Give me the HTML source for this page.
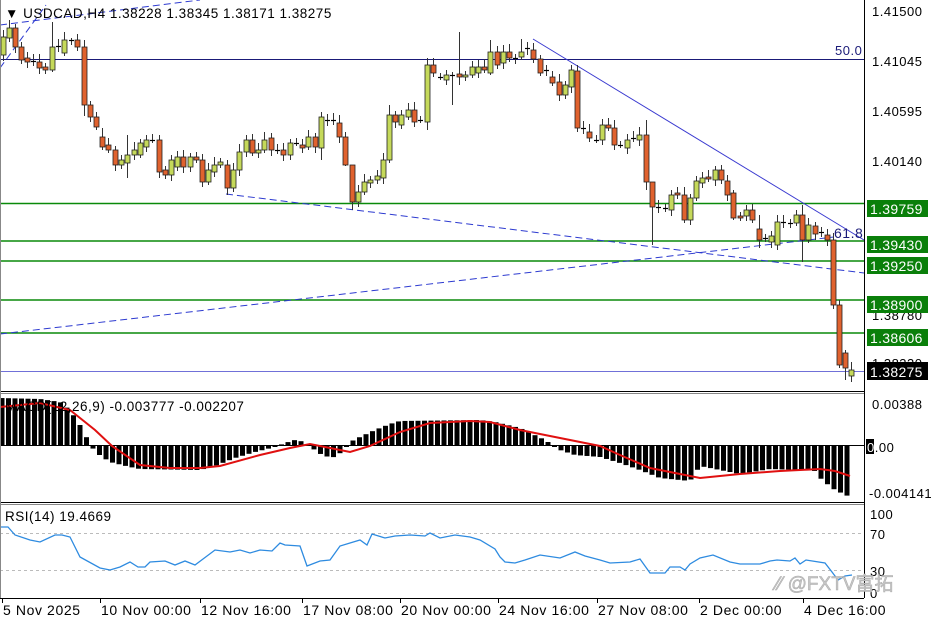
<!DOCTYPE html>
<html><head><meta charset="utf-8">
<style>
html,body{margin:0;padding:0;background:#fff;}
body{width:936px;height:624px;overflow:hidden;font-family:"Liberation Sans","Noto Sans CJK SC",sans-serif;}
svg text{font-family:"Liberation Sans","Noto Sans CJK SC",sans-serif;font-size:13px;letter-spacing:0.5px;fill:#000;}
</style></head>
<body>
<svg id="c" width="936" height="624" xmlns="http://www.w3.org/2000/svg">
<rect width="936" height="624" fill="#fff"/>
<g id="lines">
<line x1="0" y1="59.5" x2="864" y2="59.5" stroke="#1a1a78" stroke-width="1"/>
<line x1="0" y1="371.5" x2="864" y2="371.5" stroke="#7070d8" stroke-width="1"/>
<g stroke="#0a8a0a" stroke-width="1.6">
<line x1="0" y1="203.5" x2="864" y2="203.5"/>
<line x1="0" y1="241" x2="864" y2="241"/>
<line x1="0" y1="261" x2="864" y2="261"/>
<line x1="0" y1="300" x2="864" y2="300"/>
<line x1="0" y1="333" x2="864" y2="333"/>
</g>
<line x1="533" y1="39" x2="864" y2="240" stroke="#3a3ad0" stroke-width="1"/>
<line x1="226" y1="194" x2="864" y2="273" stroke="#2d3ad0" stroke-width="1" stroke-dasharray="7,4"/>
<line x1="0" y1="334" x2="834" y2="237" stroke="#2d3ad0" stroke-width="1" stroke-dasharray="7,4"/>
<line x1="0" y1="68" x2="46" y2="5" stroke="#2d3ad0" stroke-width="1" stroke-dasharray="7,4"/>
<line x1="0" y1="25" x2="200" y2="0" stroke="#2d3ad0" stroke-width="1" stroke-dasharray="7,4"/>
<text x="835" y="55" style="fill:#1a1a78">50.0</text>
<text x="834" y="238" style="fill:#1a1a78;font-size:14px">61.8</text>
</g>
<g id="candles"></g>
<g id="macd"></g>
<g id="rsi"></g>
<g stroke="#000" fill="none">
<line x1="864.5" y1="0" x2="864.5" y2="598"/>
<line x1="0" y1="391.5" x2="864" y2="391.5"/>
<line x1="0" y1="393.5" x2="864" y2="393.5" stroke="#888"/>
<line x1="0" y1="502.5" x2="864" y2="502.5"/>
<line x1="0" y1="504.5" x2="864" y2="504.5" stroke="#888"/>
<line x1="0" y1="598.5" x2="864" y2="598.5"/>
<line x1="0.5" y1="0" x2="0.5" y2="598" stroke="#888"/>
</g>
<text x="5" y="18" style="font-size:13.5px">&#9660; USDCAD,H4  1.38228 1.38345 1.38171 1.38275</text>
<text x="5" y="411" style="font-size:13.5px">MACD(12,26,9) -0.003777 -0.002207</text>
<text x="5" y="521" style="font-size:13.5px">RSI(14) 19.4669</text>
<g>
<text x="872" y="16">1.41500</text>
<text x="872" y="66">1.41045</text>
<text x="872" y="116">1.40595</text>
<text x="872" y="166">1.40140</text>
<text x="872" y="320">1.38780</text>
<text x="872" y="368">1.38330</text>
<g fill="#0a7f0a">
<rect x="867" y="200" width="61" height="17"/>
<rect x="867" y="236" width="61" height="17"/>
<rect x="867" y="257" width="61" height="17"/>
<rect x="867" y="296" width="61" height="17"/>
<rect x="867" y="329" width="61" height="17"/>
</g>
<rect x="867" y="362" width="61" height="18" fill="#000"/>
<text x="870" y="214" style="fill:#fff;font-size:14px;letter-spacing:0.3px">1.39759</text>
<text x="870" y="250" style="fill:#fff;font-size:14px;letter-spacing:0.3px">1.39430</text>
<text x="870" y="271" style="fill:#fff;font-size:14px;letter-spacing:0.3px">1.39250</text>
<text x="870" y="310" style="fill:#fff;font-size:14px;letter-spacing:0.3px">1.38900</text>
<text x="870" y="343" style="fill:#fff;font-size:14px;letter-spacing:0.3px">1.38606</text>
<text x="870" y="377" style="fill:#fff;font-size:14px;letter-spacing:0.3px">1.38275</text>
<text x="872" y="409">0.00388</text>
<rect x="866" y="439" width="8" height="15" fill="#000"/>
<text x="867" y="452"><tspan style="fill:#fff">0</tspan>.00</text>
<text x="869" y="498">-0.004141</text>
<text x="870" y="519">100</text>
<text x="870" y="539">70</text>
<text x="870" y="576">30</text>
<text x="870" y="598">0</text>
</g>
<text x="776" y="590" style="fill:#c8c8c8;font-size:19px;stroke:#aaa;stroke-width:0.5;letter-spacing:0">⁄⁄ @FXTV富拓</text>
<g id="time"></g>
</svg>
<script>
var NS="http://www.w3.org/2000/svg";
function el(p,t,a){var e=document.createElementNS(NS,t);for(var k in a)e.setAttribute(k,a[k]);p.appendChild(e);return e;}
var C=document.getElementById('candles');
var d=[[3,55,37],[9,38,28],[15,28,47],[21,47,60],[27,58,62],[33,61,62],[39,62,68],[45,67,70],[52,70,47],[58,47,46],[64,53,40],[71,40,40],[77,40,47],[84,47,105],[90,105,117],[96,117,127],[102,137,147],[108,145,150],[115,150,165],[121,165,160],[127,163,155],[134,155,150],[140,155,143],[146,147,140],[152,140,140],[159,140,172],[165,170,175],[171,175,160],[177,167,157],[183,157,167],[190,167,157],[196,157,160],[202,160,182],[208,182,170],[214,172,165],[220,165,162],[227,165,188],[233,188,170],[239,170,152],[246,152,140],[252,140,153],[258,153,150],[264,150,140],[271,138,150],[277,150,150],[283,150,155],[290,155,143],[296,143,143],[302,145,148],[308,147,137],[315,137,147],[321,148,117],[327,120,120],[333,120,121],[339,123,137],[345,137,165],[352,165,202],[358,202,192],[364,192,182],[370,183,180],[377,180,176],[383,178,160],[389,160,115],[395,115,122],[401,125,115],[408,117,110],[414,110,122],[420,120,120],[427,122,65],[433,65,73],[440,77,77],[446,80,75],[452,75,75],[459,74,77],[465,77,75],[472,75,67],[478,73,67],[484,67,70],[490,73,52],[497,52,65],[503,63,52],[509,52,58],[515,58,58],[521,57,52],[527,48,49],[533,50,59],[540,59,73],[546,70,71],[552,77,83],[559,82,95],[565,95,85],[571,87,70],[577,71,128],[583,128,128],[589,132,138],[596,140,140],[602,140,125],[608,125,128],[614,128,145],[620,145,145],[627,148,140],[633,138,138],[639,140,135],[646,135,182],[652,182,207],[658,207,208],[665,208,208],[671,210,195],[677,193,195],[684,195,220],[690,220,198],[696,198,181],[702,183,178],[708,177,179],[715,180,170],[721,170,180],[727,181,195],[733,193,218],[740,216,218],[746,216,210],[752,210,220],[759,229,240],[765,238,238],[771,242,236],[777,245,222],[783,222,222],[790,223,223],[796,223,215],[802,215,240],[808,240,225],[815,226,234],[821,232,233],[827,235,240],[833,240,305],[839,305,365],[845,353,368],[851,376,370]];
var wk={13:[40,118],52:[22,72],71:[38,45],84:[40,116],102:[128,150],127:[135,178],159:[135,178],227:[160,195],321:[112,160],345:[132,166],352:[165,210],389:[105,163],427:[58,130],452:[72,105],459:[32,85],490:[40,75],521:[39,60],646:[120,190],652:[182,245],802:[205,262],777:[215,250],759:[215,248],733:[190,220],839:[300,368],845:[350,380],851:[362,382]};
d.forEach(function(c){var x=c[0],o=c[1],cl=c[2];var t=Math.min(o,cl),b=Math.max(o,cl);var w=wk[x]||[t-4-(x%5),b+3+(x%4)];
el(C,'line',{x1:x+0.5,y1:w[0],x2:x+0.5,y2:w[1],stroke:'#333','stroke-width':1});
if(b-t<1.5){el(C,'line',{x1:x-2,y1:t+0.5,x2:x+3,y2:t+0.5,stroke:'#000','stroke-width':1.2});}
else el(C,'rect',{x:x-2,y:t,width:5,height:b-t,fill:(cl<o?'#c5d95a':'#e0622e'),stroke:'#222','stroke-width':0.8});
});
var M=document.getElementById('macd');
function interp(pts,x){for(var i=0;i<pts.length-1;i++){if(x>=pts[i][0]&&x<=pts[i+1][0]){var a=pts[i],b=pts[i+1];return a[1]+(b[1]-a[1])*(x-a[0])/(b[0]-a[0]);}}return pts[pts.length-1][1];}
var hist=[[0,398],[40,399],[60,402],[70,410],[80,425],[88,440],[95,452],[110,462],[130,467],[140,469],[200,470],[215,466],[235,458],[255,452],[275,447],[285,443],[295,440],[305,442],[312,448],[322,455],[332,458],[342,452],[350,442],[360,437],[375,430],[390,424],[400,421],[480,420],[495,422],[520,428],[545,440],[560,450],[575,455],[600,457],[620,463],[640,470],[660,478],[690,481],[700,466],[720,470],[740,474],[770,469],[800,470],[815,471],[822,480],[835,490],[850,497]];
for(var x=2;x<=852;x+=6.5){var v=interp(hist,x);var t=Math.min(v,446),h=Math.abs(v-446);el(M,'rect',{x:x-2.5,y:t,width:5,height:Math.max(h,1),fill:'#000'});}
el(M,'line',{x1:0,y1:445.5,x2:864,y2:445.5,stroke:'#000','stroke-width':1});
var sig=[[0,407],[40,403],[70,410],[95,430],[112,446],[140,465],[170,468],[200,468],[220,466],[260,455],[290,448],[310,444],[330,448],[350,452],[370,446],[400,432],[430,423],[470,421],[490,422],[520,430],[560,438],[600,446],[620,455],[650,468],[700,478],[740,474],[780,471],[820,469],[835,471],[850,476]];
el(M,'polyline',{points:sig.map(function(p){return p.join(',')}).join(' '),fill:'none',stroke:'#e01010','stroke-width':2});
var R=document.getElementById('rsi');
el(R,'line',{x1:0,y1:533.5,x2:864,y2:533.5,stroke:'#bbb','stroke-dasharray':'3,3'});
el(R,'line',{x1:0,y1:570.5,x2:864,y2:570.5,stroke:'#bbb','stroke-dasharray':'3,3'});
var rs=[[0,527],[8,527],[15,535],[30,540],[40,542],[55,535],[62,535],[70,537],[80,557],[100,568],[110,570],[120,567],[130,562],[138,567],[145,567],[150,562],[165,561],[175,565],[185,561],[195,565],[215,550],[230,552],[240,550],[250,553],[260,550],[272,551],[280,543],[285,545],[300,546],[307,566],[320,561],[330,560],[340,546],[350,543],[360,540],[367,545],[372,534],[385,538],[395,536],[410,535],[425,536],[430,533],[440,538],[455,535],[470,537],[480,540],[495,549],[500,557],[505,562],[515,563],[525,560],[540,555],[560,558],[575,552],[585,556],[600,560],[610,563],[630,562],[640,559],[650,573],[665,573],[670,567],[680,567],[685,570],[690,564],[700,558],[713,555],[730,562],[740,564],[760,564],[770,561],[777,560],[790,561],[795,558],[800,564],[806,560],[825,563],[832,572],[838,580],[845,576],[852,575]];
el(R,'polyline',{points:rs.map(function(p){return p.join(',')}).join(' '),fill:'none',stroke:'#2e8be0','stroke-width':1.3});
var T=document.getElementById('time');
[[3,"5 Nov 2025"],[101,"10 Nov 00:00"],[201,"12 Nov 16:00"],[303,"17 Nov 08:00"],[401,"20 Nov 00:00"],[499,"24 Nov 16:00"],[598,"27 Nov 08:00"],[700,"2 Dec 00:00"],[804,"4 Dec 16:00"]].forEach(function(a){
el(T,'line',{x1:a[0]-0.5,y1:598,x2:a[0]-0.5,y2:603,stroke:'#000'});
var t=el(T,'text',{x:a[0],y:615,style:'font-size:14px;letter-spacing:0.6px'});t.textContent=a[1];});
</script>
</body></html>
